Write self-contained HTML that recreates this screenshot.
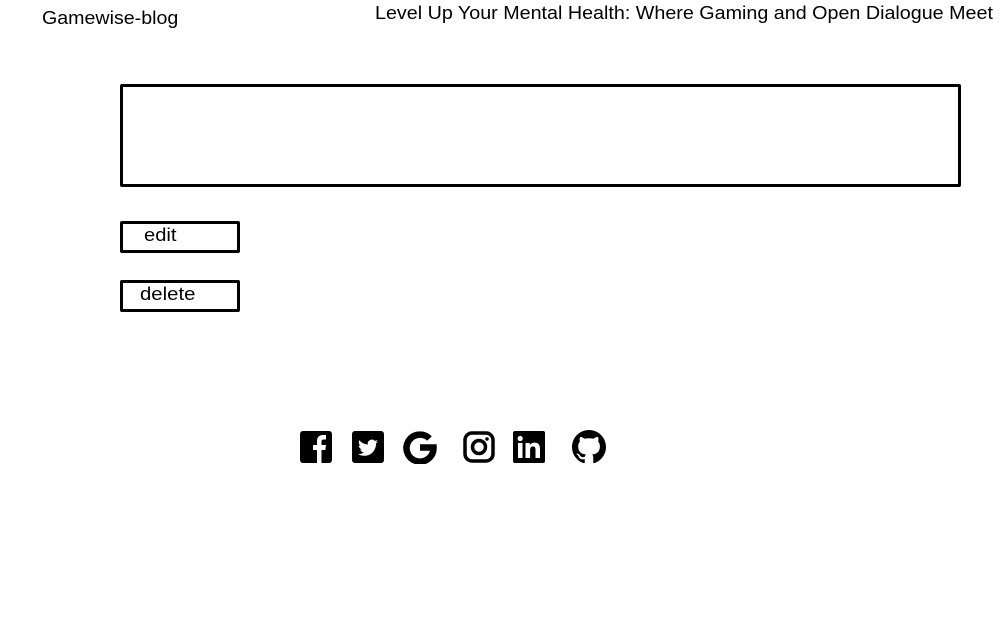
<!DOCTYPE html>
<html><head><meta charset="utf-8"><style>
body{margin:0;width:1006px;height:628px;background:#fff;font-family:"Liberation Sans",sans-serif;color:#000;position:relative;overflow:hidden}
.t{position:absolute;white-space:nowrap;transform-origin:left}
.box{position:absolute;border:3px solid #000;border-radius:2px;box-sizing:border-box}
svg{position:absolute}
</style></head><body>
<div class="t" style="left:42px;top:8px;font-size:18px;transform:scaleX(1.09)">Gamewise-blog</div>
<div class="t" style="left:375px;top:3px;font-size:18px;transform:scaleX(1.095)">Level Up Your Mental Health: Where Gaming and Open Dialogue Meet</div>
<div class="box" style="left:120px;top:84px;width:841px;height:103px"></div>
<div class="box" style="left:120px;top:221px;width:120px;height:32px"></div>
<div class="t" style="left:144px;top:225px;font-size:18px;transform:scaleX(1.12)">edit</div>
<div class="box" style="left:120px;top:280px;width:120px;height:32px"></div>
<div class="t" style="left:140px;top:284px;font-size:18px;transform:scaleX(1.13)">delete</div>

<!-- facebook -->
<svg style="left:300px;top:431px" width="32" height="32" viewBox="0 0 32 32"><rect width="32" height="32" rx="3"/><path d="M17 32V19h-4v-5h4v-4c0-4 2.5-6 6-6h3v4.5h-2.5c-1.5 0-2 .8-2 2V14h4.5l-.7 5H21.5v13z" fill="#fff"/></svg>
<!-- twitter -->
<svg style="left:352px;top:431px" width="32" height="32" viewBox="0 0 32 32"><rect width="32" height="32" rx="3"/><path d="M26 10.5c-.8.4-1.6.6-2.4.7.9-.5 1.5-1.3 1.8-2.3-.8.5-1.7.8-2.6 1a4.1 4.1 0 0 0-7 3.7c-3.4-.2-6.4-1.8-8.4-4.3-1.1 1.9-.5 4.3 1.3 5.5-.7 0-1.3-.2-1.9-.5 0 2 1.4 3.7 3.3 4.1-.6.2-1.2.2-1.9.1.5 1.6 2 2.8 3.8 2.8A8.3 8.3 0 0 1 6 23c1.8 1.2 4 1.8 6.3 1.8 7.6 0 11.9-6.4 11.7-12.3.8-.6 1.5-1.3 2-2z" fill="#fff"/></svg>
<!-- google -->
<svg style="left:403px;top:430px" width="34" height="34" viewBox="0 0 34 34"><path d="M26.5 8.5A13.5 13.5 0 1 0 30.5 17.5H17" fill="none" stroke="#000" stroke-width="6.5"/></svg>
<!-- instagram -->
<svg style="left:463px;top:431px" width="32" height="32" viewBox="0 0 32 32" fill="none" stroke="#000"><rect x="2" y="2" width="28" height="28" rx="7" stroke-width="3.5"/><circle cx="16" cy="16" r="6.5" stroke-width="3.5"/><circle cx="24" cy="8" r="1.8" fill="#000" stroke="none"/></svg>
<!-- linkedin -->
<svg style="left:513px;top:431px" width="32" height="32" viewBox="0 0 32 32"><rect width="32" height="32" rx="2"/><rect x="5" y="12" width="4.5" height="15" fill="#fff"/><circle cx="7.2" cy="7.5" r="2.6" fill="#fff"/><path d="M12.5 12h4.3v2c.7-1.3 2.4-2.4 4.8-2.4 4.5 0 5.4 3 5.4 6.8V27h-4.5v-7.6c0-1.8 0-4-2.5-4s-2.9 1.9-2.9 3.9V27h-4.6z" fill="#fff"/></svg>
<!-- github -->
<svg style="left:572px;top:430px" width="34" height="34" viewBox="0 0 16 16"><path d="M8 0C3.58 0 0 3.58 0 8c0 3.54 2.29 6.53 5.47 7.59.4.07.55-.17.55-.38 0-.19-.01-.82-.01-1.49-2.01.37-2.53-.49-2.69-.94-.09-.23-.48-.94-.82-1.13-.28-.15-.68-.52-.01-.53.63-.01 1.08.58 1.23.82.72 1.21 1.87.87 2.33.66.07-.52.28-.87.51-1.07-1.78-.2-3.64-.89-3.64-3.95 0-.87.31-1.59.82-2.15-.08-.2-.36-1.02.08-2.12 0 0 .67-.21 2.2.82.64-.18 1.32-.27 2-.27.68 0 1.36.09 2 .27 1.53-1.04 2.2-.82 2.2-.82.44 1.1.16 1.92.08 2.12.51.56.82 1.27.82 2.15 0 3.07-1.87 3.75-3.65 3.95.29.25.54.73.54 1.48 0 1.07-.01 1.93-.01 2.2 0 .21.15.46.55.38A8.013 8.013 0 0 0 16 8c0-4.42-3.58-8-8-8z"/></svg>
</body></html>
